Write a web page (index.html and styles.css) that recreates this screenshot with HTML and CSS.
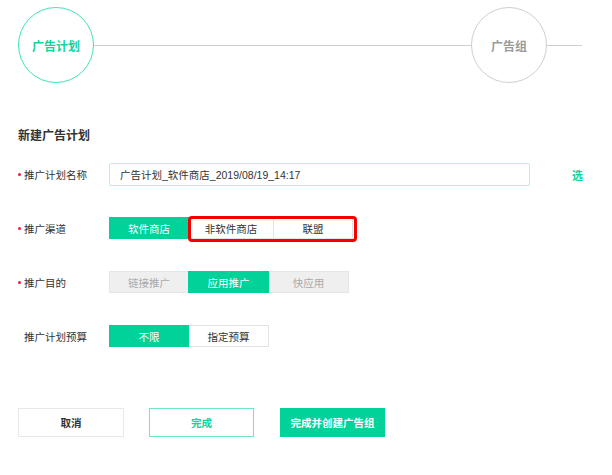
FILE: index.html
```html
<!DOCTYPE html>
<html lang="zh-CN">
<head>
<meta charset="utf-8">
<title>新建广告计划</title>
<link rel="stylesheet" href="styles.css">
</head>
<body>
<div class="page">
  <div class="steps">
    <div class="step step-active">广告计划</div>
    <div class="step-line"></div>
    <div class="step step-idle">广告组</div>
    <div class="step-tail"></div>
  </div>

  <h2 class="title">新建广告计划</h2>

  <div class="row row-name">
    <div class="label"><span class="dot"></span>推广计划名称</div>
    <div class="input">广告计划_软件商店_2019/08/19_14:17</div>
    <div class="pick">选</div>
  </div>

  <div class="row row-seg">
    <div class="label"><span class="dot"></span>推广渠道</div>
    <div class="seg-group seg-channel">
      <div class="seg seg-on">软件商店</div>
      <div class="seg seg-wide">非软件商店</div>
      <div class="seg seg-narrow">联盟</div>
      <div class="highlight"></div>
    </div>
  </div>

  <div class="row row-seg">
    <div class="label"><span class="dot"></span>推广目的</div>
    <div class="seg-group seg-gray">
      <div class="seg seg-off">链接推广</div>
      <div class="seg seg-on">应用推广</div>
      <div class="seg seg-off">快应用</div>
    </div>
  </div>

  <div class="row row-seg">
    <div class="label"><span class="dot dot-hidden"></span>推广计划预算</div>
    <div class="seg-group">
      <div class="seg seg-on">不限</div>
      <div class="seg">指定预算</div>
    </div>
  </div>

  <div class="actions">
    <div class="btn btn-cancel">取消</div>
    <div class="btn btn-done">完成</div>
    <div class="btn btn-primary">完成并创建广告组</div>
  </div>
</div>
</body>
</html>
```
FILE: styles.css
```css
* { box-sizing: border-box; }
html, body { margin: 0; padding: 0; background: #fff; }
body {
  font-family: "Liberation Sans", "Noto Sans CJK SC", sans-serif;
  font-size: 10.5px;
  color: #333;
}
.page {
  width: 612px;
  height: 475px;
  overflow: hidden;
  padding: 7px 0 0 18px;
}
.steps {
  display: flex;
  align-items: center;
  width: 564px;
  height: 76px;
}
.step {
  width: 76px;
  height: 76px;
  border-radius: 50%;
  display: flex;
  align-items: center;
  justify-content: center;
  font-weight: bold;
  font-size: 12px;
  flex: none;
}
.step-active { border: 1px solid #3ee3b8; color: #12d39e; }
.step-idle { border: 1px solid #cfcfcf; color: #9a9a9a; }
.step-line { flex: 1; height: 1px; background: #cfcfcf; }
.step-tail { width: 35px; height: 1px; background: #cfcfcf; flex: none; }

.title {
  margin: 45px 0 0 0;
  font-size: 12px;
  line-height: 16px;
  font-weight: bold;
  color: #333;
}
.row { display: flex; align-items: center; }
.row-name { margin-top: 19px; height: 23px; }
.row-seg { margin-top: 31px; }
.row-seg + .row-seg { margin-top: 32px; }
.label {
  width: 91px;
  flex: none;
  display: flex;
  align-items: center;
  color: #333;
  font-size: 10.5px;
}
.dot {
  width: 3px;
  height: 3px;
  border-radius: 50%;
  background: #f0194f;
  margin-right: 3px;
}
.dot-hidden { background: transparent; }
.input {
  width: 421px;
  height: 23px;
  border: 1px solid #bcefdd;
  border-radius: 2px;
  padding-left: 10px;
  display: flex;
  align-items: center;
  color: #333;
  font-size: 10.5px;
}
.pick {
  margin-left: 42px;
  color: #12d39e;
  font-weight: bold;
  font-size: 11px;
}
.seg-group {
  position: relative;
  display: flex;
  height: 22px;
  border-radius: 2px;
}
.seg {
  width: 81px;
  height: 22px;
  display: flex;
  align-items: center;
  justify-content: center;
  border: 1px solid #e3e3e3;
  margin-left: -1px;
  background: #fff;
  color: #333;
}
.seg:first-child { margin-left: 0; width: 80px; }
.seg-channel .seg-wide { width: 86px; }
.seg-channel .seg-narrow { width: 80px; }
.seg-on { background: #00d29a; border-color: #00d29a; color: #fff; position: relative; }
.seg-gray .seg-off { background: #efefef; border-color: #e6e6e6; color: #aaa; }
.highlight {
  position: absolute;
  left: 79px;
  top: -1px;
  width: 169px;
  height: 26px;
  border: 3px solid #f50000;
  border-radius: 4px;
}
.actions {
  display: flex;
  margin-top: 61px;
}
.btn {
  width: 106px;
  height: 29px;
  display: flex;
  align-items: center;
  justify-content: center;
  font-weight: bold;
  font-size: 10.5px;
  margin-right: 25px;
}
.btn-cancel { border: 1px solid #e8e8e8; color: #333; }
.btn-done { width: 105px; border: 1px solid #6ee5c4; color: #12d39e; margin-right: 26px; }
.btn-primary { width: 105px; background: #00d29a; color: #fff; }
```
